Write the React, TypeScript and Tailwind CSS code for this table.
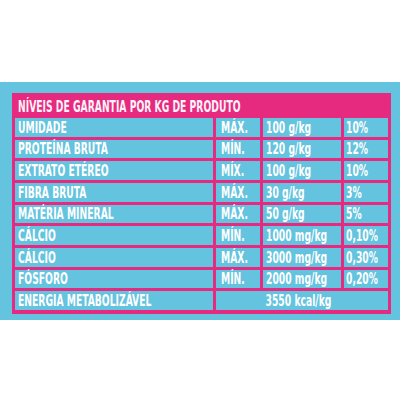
import React from "react";

const rows: [string, string, string, string][] = [
  ["UMIDADE", "MÁX.", "100 g/kg", "10%"],
  ["PROTEÍNA BRUTA", "MÍN.", "120 g/kg", "12%"],
  ["EXTRATO ETÉREO", "MÍX.", "100 g/kg", "10%"],
  ["FIBRA BRUTA", "MÁX.", "30 g/kg", "3%"],
  ["MATÉRIA MINERAL", "MÁX.", "50 g/kg", "5%"],
  ["CÁLCIO", "MÍN.", "1000 mg/kg", "0,10%"],
  ["CÁLCIO", "MÁX.", "3000 mg/kg", "0,30%"],
  ["FÓSFORO", "MÍN.", "2000 mg/kg", "0,20%"],
];

function T({ children, center = false }: { children: React.ReactNode; center?: boolean }) {
  return (
    <span
      className={
        "inline-block whitespace-nowrap scale-x-[0.64] " + (center ? "origin-center" : "origin-left")
      }
    >
      {children}
    </span>
  );
}

export default function App() {
  return (
    <div
      className="w-[400px] h-[400px] bg-white pt-[82px] text-white font-bold text-[16px] leading-[18px]"
      style={{ fontFamily: '"DejaVu Sans Condensed", "DejaVu Sans", sans-serif' }}
    >
      <div className="bg-[#64c3de] h-[238px] pt-[11px] pl-[12px]">
        <div className="w-[379px] bg-[#e62a80] px-[3px] pb-[4px]">
          <div className="h-[25px] flex items-center pl-[3px] pt-[2px] text-[#fdf3f8]">
            <T>NÍVEIS DE GARANTIA POR KG DE PRODUTO</T>
          </div>
          <div className="grid grid-cols-[198px_44px_78px_44px] auto-rows-[18.67px] gap-[3px]">
            {rows.map((r, i) => (
              <React.Fragment key={i}>
                <div className="bg-[#64c3de] flex items-center pl-[3px] pt-[1px]">
                  <T>{r[0]}</T>
                </div>
                <div className="bg-[#64c3de] flex items-center pl-[5px] pt-[1px]">
                  <T>{r[1]}</T>
                </div>
                <div className="bg-[#64c3de] flex items-center pl-[3px] pt-[1px]">
                  <T>{r[2]}</T>
                </div>
                <div className="bg-[#64c3de] flex items-center pl-[2px] pt-[1px]">
                  <T>{r[3]}</T>
                </div>
              </React.Fragment>
            ))}
            <div className="bg-[#64c3de] flex items-center pl-[3px] pt-[1px]">
              <T>ENERGIA METABOLIZÁVEL</T>
            </div>
            <div className="col-span-3 bg-[#64c3de] flex items-center justify-center pr-[8px] pt-[1px]">
              <T center>3550 kcal/kg</T>
            </div>
          </div>
        </div>
      </div>
    </div>
  );
}
